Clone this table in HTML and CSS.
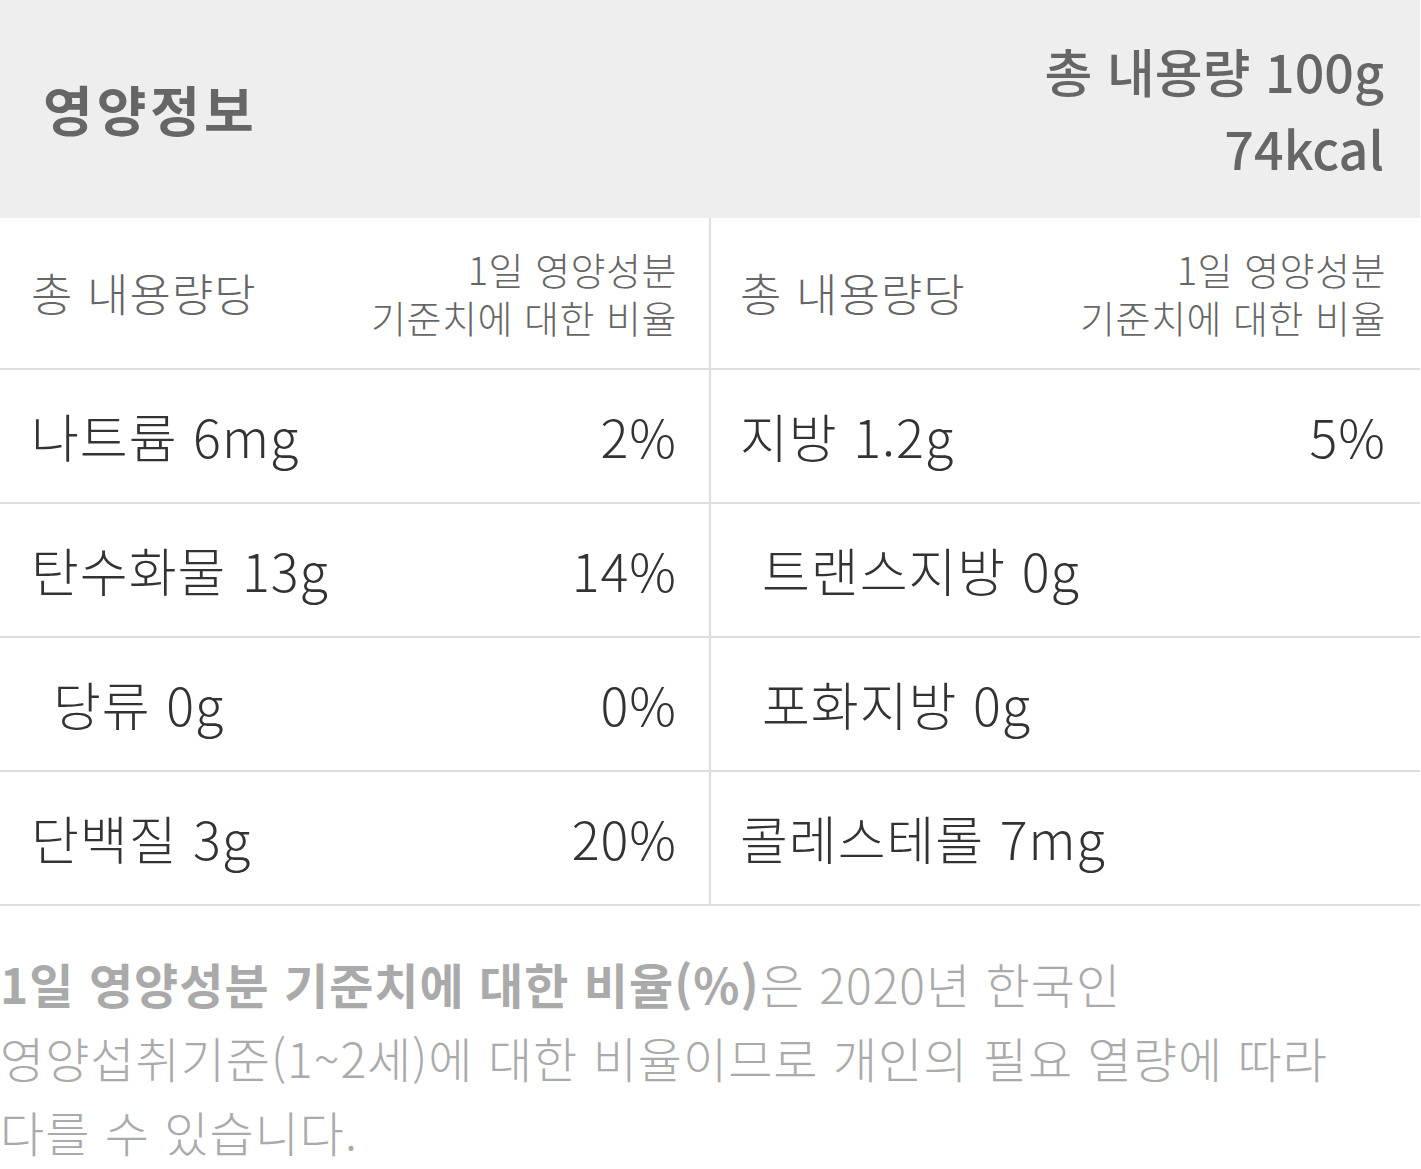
FILE: index.html
```html
<!DOCTYPE html>
<html lang="ko">
<head>
<meta charset="utf-8">
<title>영양정보</title>
<link rel="stylesheet" href="styles.css">
</head>
<body>
<div class="nutrition">
  <div class="nutrition-head">
    <h2 class="head-title">영양정보</h2>
    <div class="head-total">
      <div>총 내용량 100g</div>
      <div>74kcal</div>
    </div>
  </div>
  <div class="nutrition-table">
    <div class="cell cell-left cell-head">
      <span class="head-label">총 내용량당</span>
      <span class="head-ratio">1일 영양성분<br>기준치에 대한 비율</span>
    </div>
    <div class="cell cell-head">
      <span class="head-label">총 내용량당</span>
      <span class="head-ratio">1일 영양성분<br>기준치에 대한 비율</span>
    </div>

    <div class="cell cell-left"><span>나트륨 6mg</span><span>2%</span></div>
    <div class="cell"><span>지방 1.2g</span><span>5%</span></div>

    <div class="cell cell-left"><span>탄수화물 13g</span><span>14%</span></div>
    <div class="cell"><span class="sub">트랜스지방 0g</span><span></span></div>

    <div class="cell cell-left"><span class="sub">당류 0g</span><span>0%</span></div>
    <div class="cell"><span class="sub">포화지방 0g</span><span></span></div>

    <div class="cell cell-left"><span>단백질 3g</span><span>20%</span></div>
    <div class="cell"><span>콜레스테롤 7mg</span><span></span></div>
  </div>
  <p class="note"><strong>1일 영양성분 기준치에 대한 비율(%)</strong>은 2020년 한국인<br>영양섭취기준(1~2세)에 대한 비율이므로 개인의 필요 열량에 따라<br>다를 수 있습니다.</p>
</div>
</body>
</html>
```

FILE: styles.css
```css
* {
  box-sizing: border-box;
}

html, body {
  margin: 0;
  padding: 0;
  background: #ffffff;
}

body {
  font-family: "Noto Sans CJK KR", "Noto Sans", sans-serif;
}

.nutrition {
  width: 1420px;
}

.nutrition-head {
  height: 218px;
  background: #eeeeee;
  display: flex;
  align-items: center;
  justify-content: space-between;
  padding: 0 36px 0 43px;
  color: #666666;
}

.head-title {
  margin: 0;
  font-size: 54px;
  font-weight: 700;
  letter-spacing: 4px;
  line-height: 1;
}

.head-total {
  text-align: right;
  font-size: 52px;
  font-weight: 500;
  line-height: 77px;
}

.nutrition-table {
  display: grid;
  grid-template-columns: 711px 709px;
  grid-template-rows: 152px repeat(4, 134px);
}

.cell {
  display: flex;
  align-items: center;
  justify-content: space-between;
  padding: 0 34px 0 29px;
  border-bottom: 2px solid #dddddd;
  font-size: 52px;
  letter-spacing: 1px;
  font-weight: 300;
  color: #333333;
  line-height: 1.2;
}

.cell-left {
  border-right: 2px solid #dddddd;
  padding: 0 32px 0 31px;
}

.cell-head {
  color: #666666;
  font-weight: 300;
}

.head-label {
  font-size: 45px;
  letter-spacing: 1px;
}

.head-ratio {
  font-size: 38px;
  letter-spacing: 0.5px;
  line-height: 48px;
  text-align: right;
}

.sub {
  padding-left: 22px;
}

.note {
  margin: 40px 0 0;
  font-size: 48px;
  letter-spacing: 1px;
  line-height: 74px;
  font-weight: 300;
  color: #aaaaaa;
}

.note strong {
  font-weight: 700;
}
```
